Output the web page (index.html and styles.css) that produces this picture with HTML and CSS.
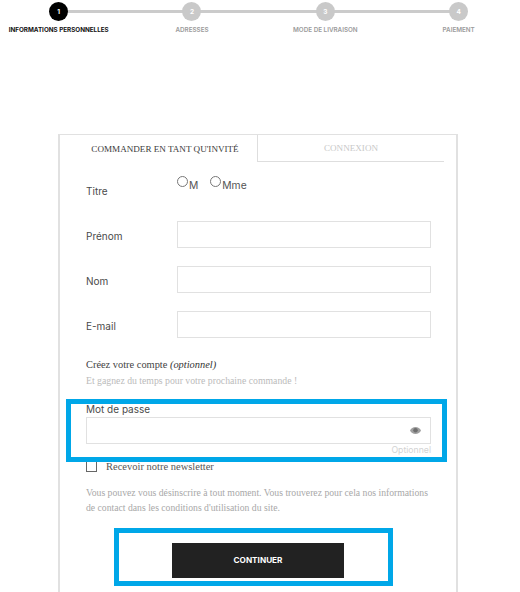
FILE: index.html
```html
<!DOCTYPE html>
<html lang="fr">
<head>
<meta charset="utf-8">
<title>Commande</title>
<link rel="stylesheet" href="styles.css">
</head>
<body>
<ol class="stepper">
  <li class="step step-active"><span class="step-dot">1</span><span class="step-label">INFORMATIONS PERSONNELLES</span></li>
  <li class="step"><span class="step-dot">2</span><span class="step-label">ADRESSES</span></li>
  <li class="step"><span class="step-dot">3</span><span class="step-label">MODE DE LIVRAISON</span></li>
  <li class="step"><span class="step-dot">4</span><span class="step-label">PAIEMENT</span></li>
</ol>
<main class="card">
  <div class="tabs">
    <div class="tab tab-active">COMMANDER EN TANT QU'INVITÉ</div>
    <div class="tab tab-idle">CONNEXION</div>
  </div>
  <form class="form">
    <div class="row row-title">
      <span class="label label-title">Titre</span>
      <div class="radios">
        <label class="radio"><span class="radio-mark"></span>M</label>
        <label class="radio"><span class="radio-mark"></span>Mme</label>
      </div>
    </div>
    <div class="row"><label class="label">Prénom</label><input class="input" type="text"></div>
    <div class="row"><label class="label">Nom</label><input class="input" type="text"></div>
    <div class="row"><label class="label">E-mail</label><input class="input" type="email"></div>
    <p class="account">Créez votre compte <em>(optionnel)</em></p>
    <p class="account-sub">Et gagnez du temps pour votre prochaine commande !</p>
    <div class="password">
      <span class="highlight highlight-pw"></span>
      <label class="label label-pw">Mot de passe</label>
      <div class="pw-box">
        <svg class="eye" viewBox="0 0 22 14" width="11" height="7"><path fill="#a0a0a0" d="M11 0C6 0 2 3 0 7c2 4 6 7 11 7s9-3 11-7c-2-4-6-7-11-7z"/><circle cx="11" cy="6.500" r="4.500" fill="#6e6e6e"/></svg>
      </div>
      <div class="pw-hint">Optionnel</div>
    </div>
    <label class="newsletter"><span class="check"></span>Recevoir notre newsletter</label>
    <p class="legal">Vous pouvez vous désinscrire à tout moment. Vous trouverez pour cela nos informations de contact dans les conditions d'utilisation du site.</p>
    <div class="actions">
      <span class="highlight highlight-btn"></span>
      <button class="submit" type="button">CONTINUER</button>
    </div>
  </form>
</main>
</body>
</html>
```
FILE: styles.css
```css
* { box-sizing: border-box; }
html, body { margin: 0; padding: 0; height: 592px; overflow: hidden; background: #fff; }
body { font-family: Inter, "Open Sans", sans-serif; color: #333; }

.stepper {
  position: relative;
  display: flex;
  list-style: none;
  margin: 0 0 0 -8px;
  padding: 2px 0 0;
  width: 540px;
  height: 134px;
}
.stepper::before {
  content: "";
  position: absolute;
  left: 67px;
  width: 400px;
  top: 10px;
  height: 2.500px;
  background: #cbcbcb;
}
.step { position: relative; width: 133.330px; display: flex; flex-direction: column; align-items: center; }
.step-dot {
  width: 19px; height: 19px; border-radius: 50%;
  background: #c9c9c9; color: #fff;
  font-size: 6.500px; font-weight: 700;
  display: flex; align-items: center; justify-content: center;
}
.step-label {
  margin-top: 5px; font-size: 6.300px; line-height: 9px; font-weight: 600;
  color: #9b9b9b; white-space: nowrap;
}
.step-active .step-dot { background: #000; }
.step-active .step-label { color: #111; font-weight: 700; }

.card {
  width: 400px; margin-left: 58px; height: 520px;
  border: 2px solid #e1e1e1; border-bottom: 0; border-top-width: 1.500px;
}
.tabs { display: flex; width: 384px; height: 27px; }
.tab {
  display: flex; align-items: center; justify-content: center;
  font-family: "Liberation Serif", serif; font-size: 9.100px; white-space: nowrap;
}
.tab-active { width: 198px; padding-left: 13px; color: #3a3a3a; border-right: 1.500px solid #dedede; }
.tab-idle { flex: 1; color: #c8c8c8; border-bottom: 1.500px solid #dedede; }

.form { padding: 0 25px 0 26px; font-size: 10px; }
.row { display: flex; align-items: center; height: 27px; margin-bottom: 18px; }
.label { width: 91px; padding-top: 2px; font-size: 10px; color: #4a4a4a; }
.input { flex: 1; height: 27px; border: 1.500px solid #e1e1e1; background: #fff; outline: 0; padding: 0; }
.row-title { height: 59px; margin-bottom: 0; align-items: flex-start; padding-top: 12px; }
.label-title { margin-top: 9px; }
.radios { display: flex; gap: 12px; margin-top: 4px; }
.radio { display: flex; align-items: flex-start; font-size: 10.300px; line-height: 13px; color: #555; padding-top: 1px; }
.radio-mark { width: 11px; height: 11px; border: 1px solid #777; border-radius: 50%; margin: -3px 1px 0 0; }

.account { margin: 20px 0 0; font-family: "Liberation Serif", serif; font-size: 10.400px; line-height: 14px; color: #444; }
.account em { color: #333; }
.account-sub { margin: 2px 0 0; font-family: "Liberation Serif", serif; font-size: 9.750px; line-height: 14px; color: #bbb; }

.password { position: relative; margin-top: 15px; }
.label-pw { display: block; width: auto; padding-top: 0; font-size: 10px; line-height: 13px; }
.pw-box {
  height: 27px; margin-top: 1px; border: 1.500px solid #e1e1e1;
  display: flex; align-items: center; justify-content: flex-end; padding-right: 9px;
}
.pw-hint { text-align: right; font-size: 8.700px; line-height: 12px; color: #d3d3d3; }
.highlight { position: absolute; border: 5px solid #00a7e8; pointer-events: none; }
.highlight-pw { left: -20px; right: -16px; top: -4px; height: 63px; }

.newsletter {
  display: flex; align-items: center; margin-top: 3px; height: 14px;
  font-family: "Liberation Serif", serif; font-size: 10.500px; color: #555;
}
.check { width: 11px; height: 11px; border: 1px solid #666; margin-right: 9px; }

.legal {
  margin: 12px 0 0; font-family: "Liberation Serif", serif; font-size: 9.700px; line-height: 15px; color: #a8a8a8;
}
.actions { position: relative; display: flex; justify-content: center; margin-top: 28px; }
.highlight-btn { left: 28px; top: -15px; width: 279px; height: 58px; }
.submit {
  width: 172px; height: 35px; margin-left: -1px; padding: 0 0 2px; border: 0; background: #222; color: #fff;
  font-family: Inter, sans-serif; font-size: 8.200px; font-weight: 700;
}
```
